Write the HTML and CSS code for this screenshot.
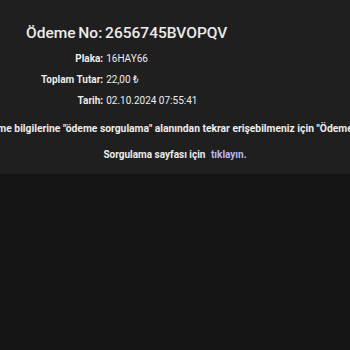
FILE: index.html
```html
<!DOCTYPE html>
<html lang="tr">
<head>
<meta charset="utf-8">
<link rel="stylesheet" href="styles.css">
</head>
<body>
<div class="card">
  <h1 class="title">Ödeme No: 2656745BVOPQV</h1>
  <table class="info">
    <tr><th>Plaka:</th><td>16HAY66</td></tr>
    <tr><th>Toplam Tutar:</th><td>22,00 ₺</td></tr>
    <tr><th>Tarih:</th><td>02.10.2024 07:55:41</td></tr>
  </table>
  <div class="note"><span>Ödeme bilgilerine "ödeme sorgulama" alanından tekrar erişebilmeniz için "Ödeme No"</span></div>
  <p class="query">Sorgulama sayfası için <a href="#" class="link">tıklayın.</a></p>
</div>
</body>
</html>
```
FILE: styles.css
```css
html, body {
  margin: 0;
  padding: 0;
  background: #141414;
  color: #ececec;
  font-family: Roboto, "Noto Sans", sans-serif;
  overflow: hidden;
}
.card {
  background: #1f1f1f;
  padding: 22px 0 0;
  height: 152px;
  overflow: hidden;
}
.title {
  margin: 0 0 0 26px;
  font-size: 15.5px;
  font-weight: 500;
  line-height: 22px;
  word-spacing: -1px;
}
.info {
  border-collapse: collapse;
  margin: 4px 0 0 41px;
  font-size: 10px;
}
.info th {
  text-align: right;
  font-weight: 700;
  padding: 0 3px 0 0;
  height: 21px;
}
.info td {
  padding: 0;
  height: 21px;
}
.note {
  display: flex;
  justify-content: center;
  white-space: nowrap;
  font-size: 10.3px;
  font-weight: 700;
  margin-top: 11px;
}
.query {
  margin: 14px 0 0;
  text-align: center;
  font-size: 10px;
  font-weight: 700;
}
.link {
  color: #bcb6ef;
  text-decoration: none;
  margin-left: 3px;
}
```
